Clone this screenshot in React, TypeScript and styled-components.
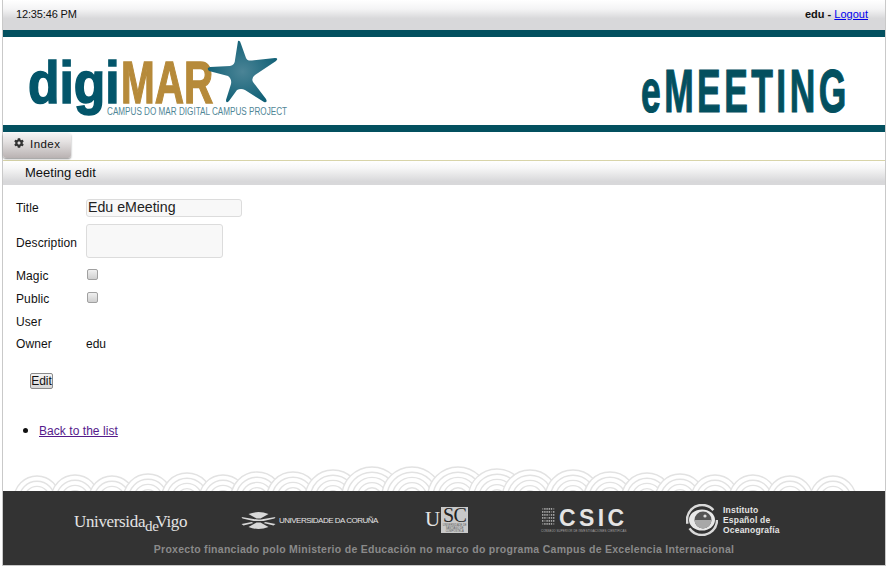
import { createGlobalStyle, styled } from "styled-components";
import { FaCog } from "react-icons/fa";

const GlobalStyle = createGlobalStyle`
  html, body {
    margin: 0;
    padding: 0;
    background: #fff;
    font-family: "Liberation Sans", Arial, sans-serif;
    color: #111;
  }
`;

const Frame = styled.div`
  box-sizing: border-box;
  display: flex;
  flex-direction: column;
  height: 566px;
  margin: 0 2px;
  border: solid 1px #c9c9c9;
  border-top: none;
  background: #fff;
`;

const TopBar = styled.div`
  display: flex;
  align-items: center;
  justify-content: space-between;
  box-sizing: border-box;
  height: 30px;
  padding: 0 17px 2px 13px;
  font-size: 11px;
  background: linear-gradient(#fff 0, #f4f4f5 30%, #d8d8da 62%, #d8d8da 100%);
`;

const Clock = styled.div`
  letter-spacing: -0.15px;
`;

const UserBox = styled.div`
  font-weight: bold;
  a {
    font-weight: normal;
    color: #0000ee;
  }
`;

const Banner = styled.div`
  display: flex;
  align-items: flex-start;
  justify-content: space-between;
  box-sizing: border-box;
  height: 102px;
  background: #fff;
  border-top: solid 7px #03505f;
  border-bottom: solid 7px #03505f;
`;

const Logo = styled.svg`
  display: block;
  flex: none;
`;

const NavBar = styled.div`
  height: 28px;
  border-bottom: solid 1px #d8d4a8;
  display: flex;
  align-items: flex-start;
`;

const NavButton = styled.div`
  display: flex;
  align-items: center;
  gap: 6px;
  box-sizing: border-box;
  width: 68px;
  height: 25px;
  margin-top: 1px;
  padding: 0 0 4px 11px;
  font-size: 11.5px;
  letter-spacing: 0.45px;
  border-radius: 3px;
  background: linear-gradient(#f5f4f4 0, #e4e1e1 35%, #b9b2b2 100%);
  box-shadow: 0 1px 2px 0 rgba(0, 0, 0, 0.45);
  svg {
    margin-top: -2px;
    color: #333;
  }
`;

const PageTitle = styled.div`
  box-sizing: border-box;
  height: 24px;
  padding: 0 0 1px 22px;
  display: flex;
  align-items: center;
  font-size: 13px;
  background: linear-gradient(#fff 0, #f6f6f6 30%, #d8d8da 85%, #d8d8da 100%);
`;

const Form = styled.div`
  padding: 8px 0 0 13px;
  font-size: 12px;
`;

const FieldRow = styled.div<{ $h: number }>`
  display: flex;
  align-items: center;
  height: ${(p) => p.$h}px;
`;

const Label = styled.div`
  width: 70px;
  flex: none;
  letter-spacing: 0.1px;
`;

const TextInput = styled.input`
  box-sizing: border-box;
  width: 156px;
  height: 18px;
  padding: 0 1px 2px;
  border: solid 1px #dcdcdc;
  border-radius: 3px;
  background: #f8f8f8;
  font-family: inherit;
  font-size: 14.2px;
  color: #222;
  outline: none;
`;

const TextArea = styled.textarea`
  box-sizing: border-box;
  display: block;
  width: 137px;
  height: 34px;
  margin-bottom: 4px;
  border: solid 1px #dcdcdc;
  border-radius: 3px;
  background: #f8f8f8;
  resize: none;
  outline: none;
`;

const Check = styled.input`
  appearance: none;
  box-sizing: border-box;
  width: 11px;
  height: 11px;
  margin: -3px 0 0 1px;
  border: solid 1px #a0a0a0;
  border-radius: 2px;
  background: linear-gradient(#f0f0f0, #cfcfcf);
`;

const EditButton = styled.button`
  display: block;
  box-sizing: border-box;
  width: 23px;
  height: 16px;
  margin: 18px 0 0 14px;
  padding: 0;
  border: solid 1px #8a8a8a;
  border-radius: 2px;
  background: linear-gradient(#f4f4f4, #d6d6d6);
  font-family: inherit;
  font-size: 12px;
  color: #111;
`;

const LinkList = styled.ul`
  margin: 32px 0 0 0;
  padding: 0 0 0 36px;
  font-size: 12px;
  letter-spacing: 0.05px;
  li::marker {
    font-size: 16px;
  }
  a {
    color: #551a8b;
  }
`;

const Footer = styled.div`
  margin-top: auto;
`;

const Wave = styled.svg`
  display: block;
`;

const FooterBody = styled.div`
  height: 74px;
  background: #333;
  box-sizing: border-box;
  padding-top: 12px;
`;

const LogoRow = styled.div`
  display: flex;
  align-items: center;
  height: 34px;
  padding-left: 71px;
  color: #e4e4e4;
`;

const VigoLogo = styled.div`
  width: 113px;
  margin-top: 3px;
  font-family: "Liberation Serif", serif;
  font-size: 17px;
  letter-spacing: -0.35px;
  white-space: nowrap;
  sub {
    font-size: 15px;
    vertical-align: -4px;
    line-height: 0;
    margin-right: -3px;
  }
`;

const CorunaLogo = styled.div`
  display: flex;
  align-items: center;
  gap: 3px;
  width: 136px;
  margin-left: 54px;
  font-size: 8px;
  letter-spacing: -0.5px;
  white-space: nowrap;
  svg {
    flex: none;
  }
`;

const UscLogo = styled.div`
  display: flex;
  width: 44px;
  margin-left: 48px;
  font-family: "Liberation Serif", serif;
  font-size: 21px;
  line-height: 25px;
`;

const UscBox = styled.div`
  width: 27px;
  height: 26px;
  margin-left: 1px;
  background: #c9c9c9;
  color: #222;
  text-align: center;
  span {
    display: block;
    line-height: 17px;
    font-size: 20px;
    letter-spacing: -0.5px;
  }
  small {
    display: block;
    font-family: "Liberation Sans", sans-serif;
    font-size: 2.6px;
    line-height: 3px;
    color: #555;
  }
`;

const CsicLogo = styled.div`
  display: grid;
  grid-template-columns: 15px auto;
  column-gap: 3px;
  width: 86px;
  margin-left: 72px;
  font-size: 23px;
  font-weight: bold;
  line-height: 20px;
  letter-spacing: 3.4px;
  small {
    grid-column: 1 / 3;
    margin-top: 1px;
    font-size: 2.9px;
    font-weight: normal;
    line-height: 4px;
    letter-spacing: 0.1px;
    white-space: nowrap;
    color: #aaa;
  }
`;

const IeoLogo = styled.div`
  display: flex;
  align-items: center;
  gap: 5px;
  margin-left: 59px;
  font-size: 8.5px;
  font-weight: bold;
  line-height: 10px;
  letter-spacing: 0.2px;
`;

const Credit = styled.div`
  margin-top: 6px;
  text-align: center;
  font-size: 10.5px;
  font-weight: bold;
  letter-spacing: 0.28px;
  color: #8a8a8a;
`;

const arches = [
  [37, 476], [75, 475], [112, 476], [148, 474], [187, 473], [223, 475], [257, 472], [293, 472],
  [333, 470], [372, 467], [412, 467], [458, 467], [497, 469], [530, 470], [573, 470], [610, 472],
  [647, 473], [680, 474], [715, 475], [753, 475], [790, 476], [833, 476],
];

function WaveStrip() {
  return (
    <Wave width="882" height="26" viewBox="3 465 882 26">
      {arches.map(([x, peak]) => {
        const r = 23 + (476 - peak) * 0.8;
        const cy = peak + r;
        return (
          <g key={x} fill="#fff" stroke="#e2e2e2" strokeWidth="1.4">
            {[0, 1, 2, 3, 4].map((i) => (
              <circle key={i} cx={x} cy={cy} r={r - i * 5.2} />
            ))}
          </g>
        );
      })}
    </Wave>
  );
}

function DigimarLogo() {
  return (
    <Logo width="340" height="88" viewBox="3 37 340 88">
      <defs>
        <radialGradient id="star" cx="50%" cy="50%" r="55%">
          <stop offset="0" stopColor="#4b8496" />
          <stop offset="1" stopColor="#0f5f75" />
        </radialGradient>
      </defs>
      <text transform="translate(28 103) scale(0.86 1)" fontFamily="'Liberation Sans',sans-serif" fontWeight="bold" fontSize="60" fill="#03556a" stroke="#03556a" strokeWidth="1.6">
        digi
      </text>
      <text transform="translate(121 103) scale(0.675 1)" fontFamily="'Liberation Sans',sans-serif" fontWeight="bold" fontSize="60" fill="#b68a3a" stroke="#b68a3a" strokeWidth="1.4">
        MAR
      </text>
      <path
        d="M238 41 Q240 40 241 44 L246 58 Q247 61 252 60.5 L275 58 Q279 58 276 61 L255 75 Q251 78 253 82 L266 99 Q268 103 264 102 L245 90 Q241 88 237 90 L229 101 Q226 104 226 100 L231 84 Q232 79 228 76 L209 71 Q206 68 210 67 L230 66 Q235 65 235 60 Z"
        fill="url(#star)"
      />
      <text x="107" y="115" fontFamily="'Liberation Sans',sans-serif" fontSize="10" fill="#4f8696" textLength="180" lengthAdjust="spacingAndGlyphs">
        CAMPUS DO MAR DIGITAL CAMPUS  PROJECT
      </text>
    </Logo>
  );
}

function MeetingLogo() {
  return (
    <Logo width="260" height="88" viewBox="625 37 260 88">
      <text
        transform="translate(641 112) scale(0.58 1)"
        fontFamily="'Liberation Sans',sans-serif"
        fontWeight="bold"
        fontSize="61"
        letterSpacing="6"
        fill="#03505f"
        stroke="#03505f"
        strokeWidth="1.2"
      >
        eMEETING
      </text>
    </Logo>
  );
}

function CorunaMark() {
  return (
    <svg width="35" height="17" viewBox="0 0 34 17" fill="#d8d8d8">
      <path d="M0 5 L12 7 Q17 8 22 7 L34 5 L33 6.5 L22 9 L12 9 L1 6.5 Z" />
      <path d="M7 2 Q17 -2 27 2 L19 6.5 L15 6.5 Z" />
      <path d="M7 15 Q17 19 27 15 L19 10.5 L15 10.5 Z" />
      <path d="M0 12 L10 10 L12 11 L2 13.5 Z M34 12 L24 10 L22 11 L32 13.5 Z" />
    </svg>
  );
}

function CsicMark() {
  return (
    <svg width="15" height="20" viewBox="0 0 13 20" fill="#bdbdbd">
      {Array.from({ length: 36 }, (_, i) => (
        <rect key={i} x={(i % 6) * 2.2} y={Math.floor(i / 6) * 3} width="1.4" height="1.8" opacity={i % 5 === 0 ? 0.4 : 0.8} />
      ))}
    </svg>
  );
}

function IeoMark() {
  return (
    <svg width="32" height="32" viewBox="0 0 32 32">
      <circle cx="16" cy="16" r="15" fill="none" stroke="#d9d9d9" strokeWidth="2.5" strokeDasharray="38 5 40 11" />
      <ellipse cx="16" cy="16" rx="13" ry="10.5" fill="#e8e8e8" />
      <circle cx="17" cy="16" r="8.5" fill="#555" />
      <path d="M8.5 16 a8.5 8.5 0 0 0 17 0 Z" fill="#a8a8a8" />
      <circle cx="19" cy="12" r="1.6" fill="#ddd" />
    </svg>
  );
}

export default function App() {
  return (
    <>
      <GlobalStyle />
      <Frame>
        <TopBar>
          <Clock>12:35:46 PM</Clock>
          <UserBox>
            edu - <a href="#logout">Logout</a>
          </UserBox>
        </TopBar>
        <Banner>
          <DigimarLogo />
          <MeetingLogo />
        </Banner>
        <NavBar>
          <NavButton>
            <FaCog size={10} />
            Index
          </NavButton>
        </NavBar>
        <PageTitle>Meeting edit</PageTitle>
        <Form>
          <FieldRow $h={29}>
            <Label>Title</Label>
            <TextInput defaultValue="Edu eMeeting" />
          </FieldRow>
          <FieldRow $h={42}>
            <Label>Description</Label>
            <TextArea />
          </FieldRow>
          <FieldRow $h={23}>
            <Label>Magic</Label>
            <Check type="checkbox" />
          </FieldRow>
          <FieldRow $h={23}>
            <Label>Public</Label>
            <Check type="checkbox" />
          </FieldRow>
          <FieldRow $h={23}>
            <Label>User</Label>
          </FieldRow>
          <FieldRow $h={22}>
            <Label>Owner</Label>
            <div>edu</div>
          </FieldRow>
          <EditButton>Edit</EditButton>
        </Form>
        <LinkList>
          <li>
            <a href="#list">Back to the list</a>
          </li>
        </LinkList>
        <Footer>
          <WaveStrip />
          <FooterBody>
            <LogoRow>
              <VigoLogo>
                Universida<sub>de</sub>Vigo
              </VigoLogo>
              <CorunaLogo>
                <CorunaMark />
                UNIVERSIDADE DA CORUÑA
              </CorunaLogo>
              <UscLogo>
                U
                <UscBox>
                  <span>SC</span>
                  <small>UNIVERSIDADE DE SANTIAGO DE COMPOSTELA</small>
                </UscBox>
              </UscLogo>
              <CsicLogo>
                <CsicMark />
                CSIC
                <small>CONSEJO SUPERIOR DE INVESTIGACIONES CIENTÍFICAS</small>
              </CsicLogo>
              <IeoLogo>
                <IeoMark />
                <div>
                  Instituto
                  <br />
                  Español de
                  <br />
                  Oceanografía
                </div>
              </IeoLogo>
            </LogoRow>
            <Credit>Proxecto financiado polo Ministerio de Educación no marco do programa Campus de Excelencia Internacional</Credit>
          </FooterBody>
        </Footer>
      </Frame>
    </>
  );
}
